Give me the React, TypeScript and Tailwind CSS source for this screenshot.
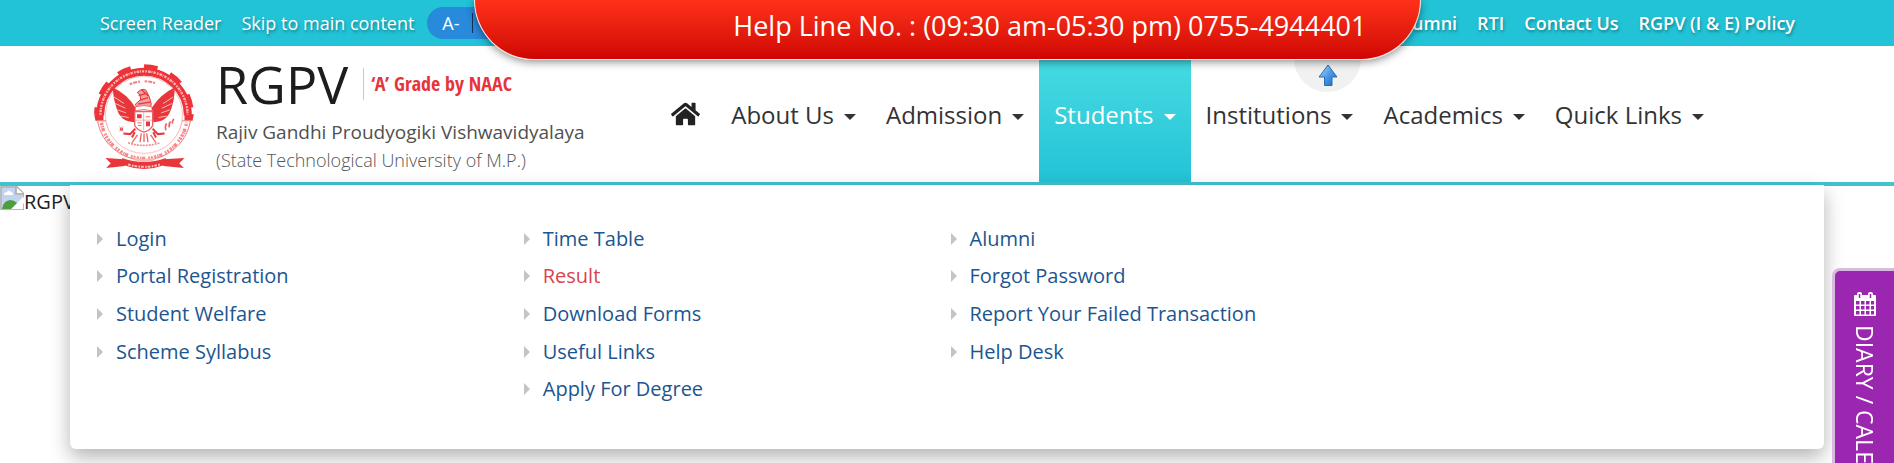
import { FaHome } from "react-icons/fa"

const navItems = ["About Us", "Admission", "Students", "Institutions", "Academics", "Quick Links"]

const topLinks = ["Alumni", "RTI", "Contact Us", "RGPV (I & E) Policy"]

const studentMenu = [
    ["Login", "Portal Registration", "Student Welfare", "Scheme Syllabus"],
    ["Time Table", "Result", "Download Forms", "Useful Links", "Apply For Degree"],
    ["Alumni", "Forgot Password", "Report Your Failed Transaction", "Help Desk"],
]

function Emblem() {
    return (
        <svg viewBox="28 24 300 322" className="mt-1 h-[107px] w-[100px] shrink-0" aria-label="RGPV emblem">
            <g transform="translate(0 -10)">
                {/* gear */}
                <path d="M46 192 A132 132 0 0 1 310 192" fill="none" stroke="#ee3338" strokeWidth="24" />
                <path d="M34 188 A144 144 0 0 1 322 188" fill="none" stroke="#ee3338" strokeWidth="12" pathLength="440" strokeDasharray="40 40" strokeDashoffset="20" />
                <path d="M28 188 h28 v20 h-24z M300 188 h28 l-4 20 h-24z" fill="#ee3338" />
                <path d="M47 190 A131 131 0 0 1 309 190" fill="none" stroke="#fbb4b6" strokeWidth="7" strokeDasharray="5 3 8 2 3 3 7 4" />
                {/* lower band */}
                <path d="M38 208 A142 142 0 0 0 318 208 L292 208 A116 116 0 0 1 64 208 Z" fill="#fffafa" stroke="#f0787b" strokeWidth="3" />
                <path d="M50 214 A130 130 0 0 0 306 214" fill="none" stroke="#f3898b" strokeWidth="10" strokeDasharray="7 3 4 2 10 9 5 3 6 4" />
                <circle cx="178" cy="190" r="116" fill="#fff" stroke="#f4a3a5" strokeWidth="2" />
            </g>
            <path d="M135 88 Q178 70 222 88" fill="none" stroke="#ef8083" strokeWidth="6" strokeDasharray="8 3 12 3 6 14" />
            {/* wings */}
            <path d="M84 98 Q86 132 92 148 Q98 172 106 182 Q116 200 150 202 L152 158 Q128 118 84 98 Z" fill="#e9363b" />
            <path d="M270 98 Q270 132 264 148 Q258 172 250 182 Q240 200 206 202 L202 158 Q228 118 270 98 Z" fill="#e9363b" />
            <g stroke="#fff" strokeWidth="2" fill="none">
                <path d="M88 126 L118 146" /><path d="M92 146 L122 160" /><path d="M98 165 L124 174" /><path d="M108 184 L132 188" />
                <path d="M266 126 L236 146" /><path d="M262 146 L232 160" /><path d="M256 165 L230 174" /><path d="M246 184 L222 188" />
            </g>
            {/* head and collar */}
            <path d="M158 113 Q172 98 184 106 L194 126 L200 148 L196 160 L158 162 L152 148 L168 134 L166 120 Z" fill="#f3a0a2" stroke="#e9363b" strokeWidth="3" />
            <path d="M162 122 L182 116 M166 136 L190 128 M160 148 L196 142 M170 104 L192 124" stroke="#e9363b" strokeWidth="4" />
            <path d="M152 156 Q178 148 202 156 L202 168 Q178 160 152 168 Z" fill="#fff" stroke="#e9363b" strokeWidth="2" />
            {/* shield */}
            <path d="M150 170 L204 170 L204 212 Q198 226 178 232 Q158 226 150 212 Z" fill="#fff" stroke="#ee6165" strokeWidth="4" />
            <path d="M177 172 V226 M152 196 H202" stroke="#f2898b" strokeWidth="2" />
            <path d="M157 178 h14 v12 h-14z M184 200 h12 v14 h-12z" fill="#e0383d" />
            <path d="M183 186 h14 M158 204 h13 M160 212 h10" stroke="#ee6165" strokeWidth="3" />
            {/* claws and tail */}
            <path d="M152 222 L136 238 L116 236 M204 222 L220 238 L240 236 M150 232 L142 248 M206 232 L214 248" stroke="#e9363b" strokeWidth="6" fill="none" />
            <path d="M170 236 L166 262 M178 236 V262 M186 236 L190 262 M158 240 L142 264 M198 240 L214 264" stroke="#ee6165" strokeWidth="4" />
            <path d="M130 264 Q178 280 226 264" stroke="#f08a8c" strokeWidth="5" fill="none" strokeDasharray="6 3" />
            <circle cx="110" cy="223" r="5" fill="#e9363b" />
            <path d="M104 214 l12 18 M116 214 l-12 18" stroke="#f08a8c" strokeWidth="2" />
            <path d="M244 226 q-4 -12 2 -20 M254 218 q-2 -12 4 -18 M264 206 q-2 -8 4 -14" stroke="#ee6165" strokeWidth="5" fill="none" />
            {/* ribbon */}
            <path d="M62 310 L118 314 L120 334 L64 340 L78 326 Z" fill="#e9363b" />
            <path d="M300 310 L238 314 L236 334 L298 340 L284 326 Z" fill="#e9363b" />
            <path d="M112 310 Q178 334 244 310 L238 332 Q178 354 118 332 Z" fill="#e9363b" />
            <path d="M130 329 Q178 344 228 329" stroke="#f9c4c5" strokeWidth="6" fill="none" strokeDasharray="8 4 5 3" />
            <path d="M146 308 Q178 318 212 308 L212 316 Q178 328 146 316 Z" fill="#f7b6b8" />
        </svg>
    )
}

function BrokenImage() {
    return (
        <svg viewBox="0 0 24 24" className="h-6 w-6 shrink-0">
            <path d="M1 1 H17 L24 8 V24 H1 Z" fill="#fff" stroke="#a5a5a5" strokeWidth="1.5" />
            <path d="M2 2 H16 V9 H23 V11 L11 23 H2 Z" fill="#c3d4f3" />
            <path d="M4 9 q0 -3 3 -3 q2 -3 4 0 q2 0 2 3 z" fill="#fff" />
            <path d="M2 23 Q3 15 10 14 Q14 14 17 17 L11 23 Z" fill="#4ba03c" />
            <path d="M24 11 L12 23 H18 L24 17 Z" fill="#fff" />
            <path d="M16 1 V8 H24" fill="#fff" stroke="#a5a5a5" strokeWidth="1.5" />
        </svg>
    )
}

function CalendarIcon() {
    return (
        <svg viewBox="0 0 22 24" className="h-6 w-[22px] shrink-0">
            <path d="M1 3 H21 Q22 3 22 4 V23 Q22 24 21 24 H1 Q0 24 0 23 V4 Q0 3 1 3 Z" fill="#fff" />
            <rect x="3" y="0" width="5" height="7" rx="2" fill="#fff" />
            <rect x="14" y="0" width="5" height="7" rx="2" fill="#fff" />
            <path d="M5.5 2 V6 M16.5 2 V6" stroke="#9b27b0" strokeWidth="1.5" />
            {[9, 14, 19].map((y) => (
                <path key={y} d={`M2 ${y} h3.5 v3.5 h-3.5z M7 ${y} h3.5 v3.5 h-3.5z M12 ${y} h3.5 v3.5 h-3.5z M17 ${y} h3 v3.5 h-3z`} fill="#9b27b0" />
            ))}
        </svg>
    )
}

function TopBar() {
    return (
        <div className="flex h-[46px] items-center justify-between bg-[#22c3d6] pr-[99px] pl-[100px] text-[18px] text-white [text-shadow:1px_2px_3px_rgba(0,0,0,0.35)]">
            <div className="flex items-center">
                <a href="#reader" className="mr-5">Screen Reader</a>
                <a href="#main" className="mr-[13px]">Skip to main content</a>
                <div className="flex h-8 items-center gap-3 rounded-full bg-[#278adb] px-[15px]">
                    <button type="button">A-</button>
                    <span className="h-5 w-px bg-[#15315a]" />
                    <button type="button">A</button>
                    <span className="h-5 w-px bg-[#15315a]" />
                    <button type="button">A+</button>
                </div>
            </div>
            <nav className="flex gap-5 font-semibold">
                {topLinks.map((link) => (
                    <a key={link} href="#top">{link}</a>
                ))}
            </nav>
        </div>
    )
}

function HelpLine() {
    return (
        <div className="absolute top-0 left-1/4 z-30 flex h-[60px] w-1/2 items-center justify-end rounded-b-[62px] border border-t-0 border-[#ffe3de] bg-linear-to-b from-[#ff3019] to-[#cf0404] pr-[53px] pb-1.5 text-[27px] text-white shadow-[0_2px_8px_rgba(0,0,0,0.45)]">
            Help Line No. : (09:30 am-05:30 pm) 0755-4944401
        </div>
    )
}

function ScrollTop() {
    return (
        <a href="#top" aria-label="Back to top" className="absolute top-[25px] right-[533px] z-20 flex h-[67px] w-[67px] items-end justify-center rounded-full bg-[#f1f1f1] pb-[6px]">
            <svg viewBox="0 0 20 22" className="h-[22px] w-5">
                <defs>
                    <linearGradient id="arrow" x1="0" y1="0" x2="1" y2="1">
                        <stop offset="0" stopColor="#b9e2fb" />
                        <stop offset="0.5" stopColor="#4a9be6" />
                        <stop offset="1" stopColor="#1b62b8" />
                    </linearGradient>
                </defs>
                <path d="M10 1 L19 13 H14 V21.5 H6.5 V13 H1 Z" fill="url(#arrow)" stroke="#2a6cb5" strokeWidth="1" />
            </svg>
        </a>
    )
}

function Dropdown() {
    return (
        <div className="absolute inset-x-[70px] top-[139px] z-10 grid grid-cols-4 rounded-b-md bg-white pt-[35px] pr-5 pb-[41px] pl-[27px] shadow-[0_8px_20px_rgba(0,0,0,0.3)]">
            {studentMenu.map((column, i) => (
                <ul key={i} className="grid h-[188px] grid-rows-5 text-[20px] text-[#1c5590]">
                    {column.map((item) => (
                        <li key={item} className="flex items-center">
                            <span className="mr-[13px] border-y-[6px] border-l-[6px] border-y-transparent border-l-[#c4c4c4]" />
                            <a href="#menu" className={item === "Result" ? "text-[#d9444f]" : ""}>{item}</a>
                        </li>
                    ))}
                </ul>
            ))}
        </div>
    )
}

function Header() {
    return (
        <header className="relative flex h-[140px] items-stretch justify-between border-b-4 border-[#41c3cf] bg-white pr-[175px] pl-[94px]">
            <a href="#home" className="flex items-center gap-[22px] text-[#1d1d1d]">
                <Emblem />
                <div>
                    <div className="flex h-16 items-center gap-[15px] pb-1">
                        <span className="text-[52px] leading-[60px]">RGPV</span>
                        <span className="h-8 w-px bg-[#c9c9c9]" />
                        <span className="-ml-2 font-['Open_Sans_Condensed'] text-[20px] font-bold text-[#e5343c]">‘A’ Grade by NAAC</span>
                    </div>
                    <div className="text-[19px] leading-7 text-[#505050]">Rajiv Gandhi Proudyogiki Vishwavidyalaya</div>
                    <div className="text-[18px] leading-7 font-light text-[#555]">(State Technological University of M.P.)</div>
                </div>
            </a>
            <nav className="flex text-[24px] text-[#333]">
                <a href="#home" aria-label="Home" className="flex items-center px-4 text-[#222]"><FaHome className="h-[26px] w-[29px]" /></a>
                {navItems.map((item) => (
                    <a key={item} href="#nav" className={`flex items-center gap-[10px] px-[15px] pt-0.5 ${item === "Students" ? "bg-linear-to-b from-[#48dde3] to-[#22c3d6] text-white" : ""}`}>
                        {item}
                        <span className="mt-1 border-x-6 border-t-6 border-x-transparent border-t-current" />
                    </a>
                ))}
            </nav>
            <Dropdown />
        </header>
    )
}

export default function App() {
    return (
        <div className="relative min-h-screen overflow-hidden bg-white font-['Open_Sans',sans-serif]">
            <TopBar />
            <HelpLine />
            <ScrollTop />
            <Header />
            <main id="main" className="flex text-[20px] leading-8 text-[#222]">
                <BrokenImage />
                RGPV
            </main>
            <a href="#diary" className="fixed top-[268px] right-0 z-20 flex h-[250px] w-[62px] flex-col items-center gap-[9px] rounded-l-lg border-3 border-r-0 border-[#d8b9e0] bg-[#9b27b0] pt-[21px] text-[23px] text-white">
                <CalendarIcon />
                <span className="whitespace-nowrap [writing-mode:vertical-rl]">DIARY / CALENDER</span>
            </a>
        </div>
    )
}
